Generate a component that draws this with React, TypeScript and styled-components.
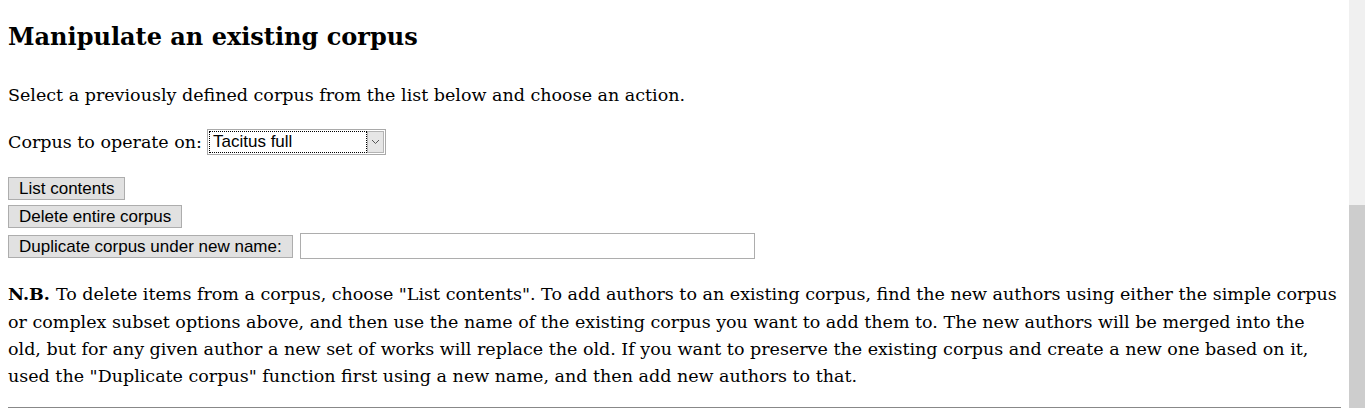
import React from 'react';
import styled, { createGlobalStyle } from 'styled-components';

const GlobalStyle = createGlobalStyle`
  html, body {
    margin: 0;
    padding: 0;
    background: #fff;
    overflow: hidden;
  }
`;

const noteLines = [
  'To delete items from a corpus, choose "List contents". To add authors to an existing corpus, find the new authors using either the simple corpus',
  'or complex subset options above, and then use the name of the existing corpus you want to add them to. The new authors will be merged into the',
  'old, but for any given author a new set of works will replace the old. If you want to preserve the existing corpus and create a new one based on it,',
  'used the "Duplicate corpus" function first using a new name, and then add new authors to that.',
];

const App = () => {
  return (
    <>
      <GlobalStyle />
      <Shell>
        <Page>
          <Title>Manipulate an existing corpus</Title>
          <Text>Select a previously defined corpus from the list below and choose an action.</Text>

          <CorpusRow>
            <span>Corpus to operate on:</span>
            <SelectBox>
              <SelectValue>Tacitus full</SelectValue>
              <SelectArrow>
                <svg width="9" height="6" viewBox="0 0 9 6">
                  <polyline points="1,1 4.5,4.5 8,1" fill="none" stroke="#555" strokeWidth="1" />
                </svg>
              </SelectArrow>
            </SelectBox>
          </CorpusRow>

          <ButtonStack>
            <ActionRow>
              <Button>List contents</Button>
            </ActionRow>
            <ActionRow>
              <Button>Delete entire corpus</Button>
            </ActionRow>
            <ActionRow>
              <Button>Duplicate corpus under new name:</Button>
              <NameInput type="text" />
            </ActionRow>
          </ButtonStack>

          <Note>
            {noteLines.map((line, i) => (
              <NoteLine key={i}>
                {i === 0 && <b>N.B. </b>}
                {line}
              </NoteLine>
            ))}
          </Note>

          <Rule />
        </Page>
        <Scrollbar>
          <Thumb />
        </Scrollbar>
      </Shell>
    </>
  );
};

//Styled Components

const Shell = styled.div`
  display: flex;
  height: 408px;
  overflow: hidden;
  font-family: 'DejaVu Serif', serif;
  color: #000;
`;

const Page = styled.div`
  flex: 1;
  padding: 0 8px;
  min-width: 0;
`;

const Title = styled.h2`
  margin: 20px 0 0;
  font-family: 'DejaVu Serif', serif;
  font-weight: bold;
  font-size: 24px;
  line-height: 34px;
`;

const Text = styled.p`
  margin: 28px 0 0;
  font-size: 17.5px;
  line-height: 27.3px;
`;

const CorpusRow = styled.div`
  display: flex;
  align-items: center;
  gap: 5px;
  height: 27px;
  margin-top: 19px;
  font-size: 17.5px;
`;

const SelectBox = styled.div`
  display: flex;
  box-sizing: border-box;
  width: 179px;
  height: 26px;
  padding: 1px;
  border: 1px solid #a9a9a9;
  background: #fff;
`;

const SelectValue = styled.div`
  flex: 1;
  border: 1px dotted #000;
  padding-left: 3px;
  font-family: 'Liberation Sans', Arial, sans-serif;
  font-size: 17px;
  line-height: 20px;
`;

const SelectArrow = styled.div`
  display: flex;
  align-items: center;
  justify-content: center;
  box-sizing: border-box;
  width: 17px;
  border: 1px solid #b4b4b4;
  background: #e6e6e6;
`;

const ButtonStack = styled.div`
  display: flex;
  flex-direction: column;
  gap: 5px;
  margin-top: 22px;
`;

const ActionRow = styled.div`
  display: flex;
  align-items: center;
  gap: 6px;
`;

const Button = styled.button`
  box-sizing: border-box;
  height: 23px;
  margin: 0;
  padding: 1px 10px;
  border: 1px solid #adadad;
  border-radius: 0;
  background: #e1e1e1;
  color: #000;
  font-family: 'Liberation Sans', Arial, sans-serif;
  font-size: 17px;
  line-height: 19px;
  white-space: nowrap;
`;

const NameInput = styled.input`
  box-sizing: border-box;
  width: 455px;
  height: 26px;
  margin: 0 0 0 1px;
  border: 1px solid #adadad;
  background: #fff;
  outline: none;
`;

const Note = styled.div`
  margin-top: 22px;
  font-size: 17.5px;
  line-height: 27.33px;

  b {
    font-weight: bold;
  }
`;

const NoteLine = styled.div`
  white-space: nowrap;
`;

const Rule = styled.hr`
  margin: 16px 0 0;
  border: 0;
  border-top: 1px solid #888;
  border-bottom: 1px solid #ddd;
`;

const Scrollbar = styled.div`
  display: flex;
  flex-direction: column;
  width: 16px;
  margin-right: 1px;
  background: #f0f0f0;
`;

const Thumb = styled.div`
  margin-top: 205px;
  flex: 1;
  background: #cdcdcd;
`;

export default App;
